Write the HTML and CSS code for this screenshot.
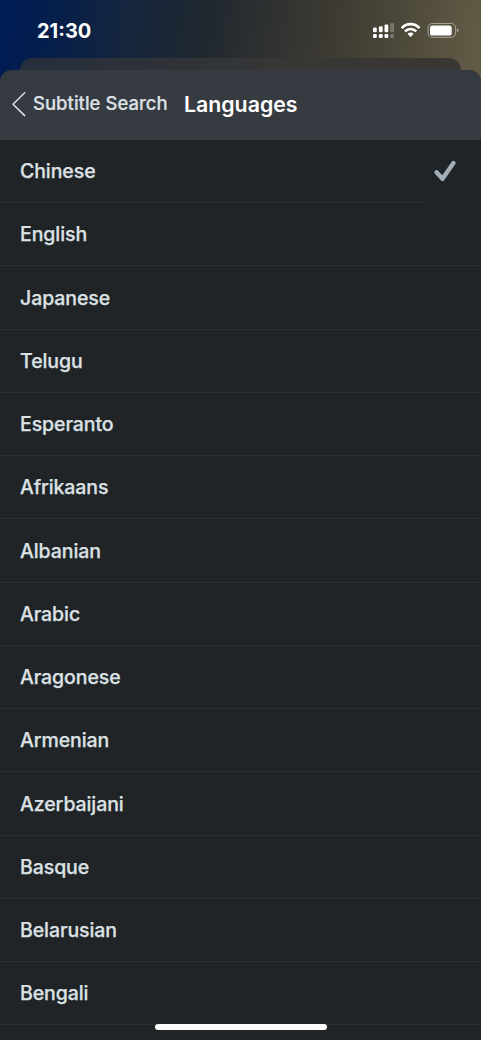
FILE: index.html
```html
<!DOCTYPE html>
<html lang="en">
<head>
<meta charset="utf-8">
<title>Languages</title>
<link rel="stylesheet" href="styles.css">
</head>
<body>
<div class="screen">
  <div class="status">
    <span class="time">21:30</span>
    <svg class="status-icons" width="90" height="20" viewBox="0 0 90 20">
      <g fill="#fff">
        <rect x="3" y="7.5" width="3.8" height="4.8" rx="1.3"/><rect x="8.9" y="6.2" width="3.8" height="6.1" rx="1.3"/><rect x="14.5" y="4.6" width="3.8" height="7.7" rx="1.3"/>
        <rect x="3" y="14" width="3.8" height="4" rx="1.3"/><rect x="8.9" y="14" width="3.8" height="4" rx="1.3"/><rect x="14.5" y="14" width="3.8" height="4" rx="1.3"/>
        <g opacity=".25"><rect x="20.2" y="3" width="3.8" height="9.3" rx="1.3"/><rect x="20.2" y="14" width="3.8" height="4" rx="1.3"/></g>
        <path d="M37.500 13.700Q40.600 11.500 43.700 13.700L41.200 16.600Q40.600 17.200 40 16.600Z"/>
      </g>
      <g fill="none" stroke="#fff" stroke-width="2.7">
        <path d="M31.700 8.100C36.700 2.900 44.500 2.900 49.500 8.100"/>
        <path d="M35 11.400C38.200 8.200 43 8.200 46.200 11.400"/>
      </g>
      <rect x="58.100" y="3.500" width="27.500" height="13.800" rx="4.300" fill="none" stroke="#fff" stroke-opacity=".45"/>
      <rect x="60" y="5.400" width="21.700" height="10.100" rx="2.600" fill="#fff"/>
      <path d="M87 8.200Q88.600 8.800 88.600 10.300T87 12.400Z" fill="#fff" opacity=".45"/>
    </svg>
  </div>
  <div class="back-sheet"></div>
  <main class="sheet">
    <header class="nav">
      <svg class="chevron" width="16" height="26" viewBox="0 0 16 26"><path d="M13.700 1.800L2 13.200L13.700 24.600" fill="none" stroke="#dce1e6" stroke-width="1.500" stroke-linecap="round" stroke-linejoin="round"/></svg>
      <span class="back">Subtitle Search</span>
      <h1 class="title">Languages</h1>
    </header>
    <ul class="list">
      <li class="row selected"><span>Chinese</span><svg class="check" width="26" height="26" viewBox="0 0 26 26"><path d="M4.500 14.300L10.500 20.800L21.500 5" fill="none" stroke="#a2adb5" stroke-width="4.400" stroke-linecap="round" stroke-linejoin="round"/></svg></li>
      <li class="row"><span>English</span></li>
      <li class="row"><span>Japanese</span></li>
      <li class="row"><span>Telugu</span></li>
      <li class="row"><span>Esperanto</span></li>
      <li class="row"><span>Afrikaans</span></li>
      <li class="row"><span>Albanian</span></li>
      <li class="row"><span>Arabic</span></li>
      <li class="row"><span>Aragonese</span></li>
      <li class="row"><span>Armenian</span></li>
      <li class="row"><span>Azerbaijani</span></li>
      <li class="row"><span>Basque</span></li>
      <li class="row"><span>Belarusian</span></li>
      <li class="row"><span>Bengali</span></li>
    </ul>
  </main>
  <div class="home-indicator"></div>
</div>
</body>
</html>
```
FILE: styles.css
```css
* { box-sizing: border-box; }
body { margin: 0; font-family: Inter, "Liberation Sans", sans-serif; }
.screen {
  position: relative;
  display: flex;
  flex-direction: column;
  width: 481px;
  height: 1040px;
  overflow: hidden;
  background: linear-gradient(98deg, #001b57 0, #061f4a 60px, #15253e 125px, #20282f 210px, #2d3031 260px, #3b3932 325px, #4c4839 400px, #625a45 481px) top / 100% 140px no-repeat #202427;
}
.status {
  display: flex;
  justify-content: space-between;
  align-items: flex-start;
  height: 58px;
  padding: 20px 21px 0 37px;
}
.time {
  color: #fff;
  font-size: 20px;
  font-weight: 700;
  line-height: 22px;
}
.status-icons { display: block; }
.back-sheet {
  flex: none;
  height: 25px;
  margin: 0 20px -12.7px;
  border-radius: 12px 12px 0 0;
  background: linear-gradient(90deg, #252e3c, #303238 35%, #373736 60%, #393733);
}
.sheet {
  flex: 1;
  position: relative;
  border-radius: 12px 12px 0 0;
  overflow: hidden;
  background: #202427;
}
.nav {
  display: flex;
  align-items: center;
  height: 69.5px;
  padding: 0 11px 1.5px;
  background: #363a41;
}
.chevron { flex: none; }
.back {
  margin: -3px 0 0 6px;
  width: 151px;
  color: #dce1e6;
  font-size: 18.5px;
  font-weight: 500;
  letter-spacing: 0.02px;
  white-space: nowrap;
  -webkit-text-stroke: 0.2px #dce1e6;
}
.title {
  margin: 0;
  color: #fff;
  font-size: 21.3px;
  font-weight: 600;
}
.list { margin: 0; padding: 0; list-style: none; }
.row {
  display: flex;
  align-items: center;
  justify-content: space-between;
  height: 63.25px;
  padding: 0.3px 23px 0 20px;
  border-bottom: 1px solid #2b2f31;
  color: #dce1e4;
  font-size: 19.5px;
  font-weight: 500;
  letter-spacing: -0.08px;
  -webkit-text-stroke: 0.25px #dce1e4;
}
.selected {
  border-image: linear-gradient(90deg, #2b2f31 424px, transparent 430px) 1;
}
.home-indicator {
  position: absolute;
  left: 155px;
  bottom: 10px;
  width: 171.5px;
  height: 6px;
  border-radius: 3px;
  background: #fff;
}
```
